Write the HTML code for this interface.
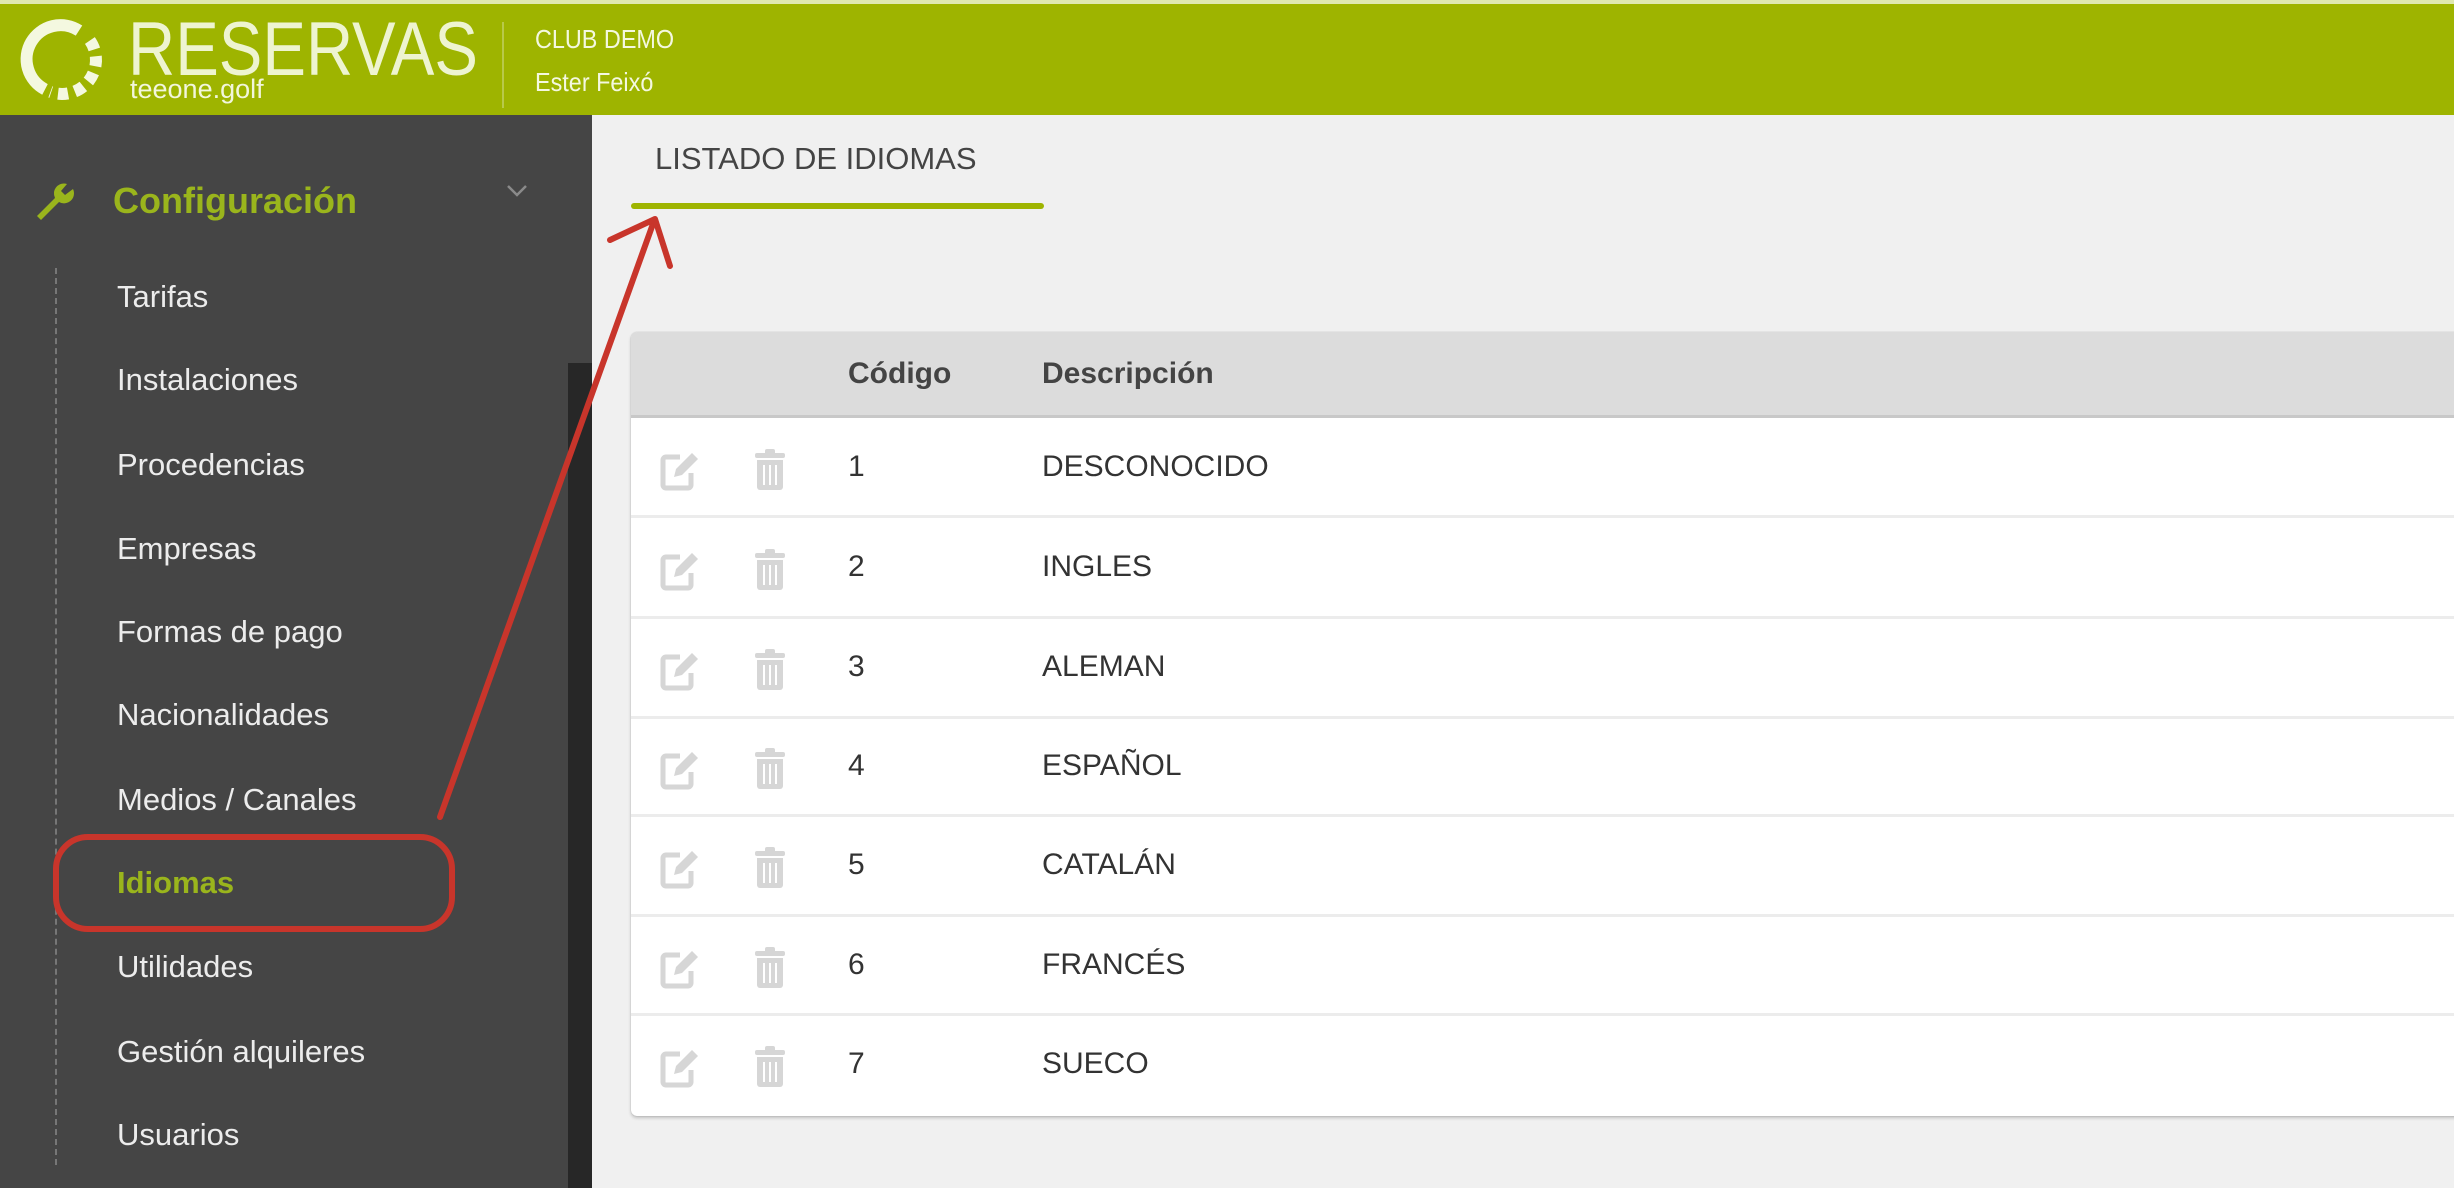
<!DOCTYPE html>
<html><head><meta charset="utf-8"><style>
*{margin:0;padding:0;box-sizing:border-box}
body{width:2454px;height:1188px;overflow:hidden;background:#f0f0f0;font-family:"Liberation Sans",sans-serif;position:relative}
.hdr{position:absolute;left:0;top:0;width:2454px;height:115px;background:#9eb400;border-top:4px solid #dfe8b0}
.abs{position:absolute;white-space:nowrap}
.side{position:absolute;left:0;top:115px;width:592px;height:1073px;background:#454545}
.strip{position:absolute;left:568px;top:363px;width:24px;height:825px;background:#272727}
.mi{position:absolute;left:117px;font-size:31px;color:#ececec;transform:translateY(-50%)}
.tbl{position:absolute;left:631px;top:332px;width:1830px;height:784px;background:#fff;border-radius:6px 0 0 6px;box-shadow:0 2px 3px rgba(0,0,0,.2),0 0 1px rgba(0,0,0,.25)}
.th{position:absolute;left:0;top:0;width:100%;height:86px;background:#dcdcdc;border-bottom:3px solid #c8c8c8;border-radius:6px 0 0 0}
.cell{position:absolute;font-size:30px;color:#333;transform:translateY(-50%)}
</style></head><body>
<div class="hdr"></div>
<svg class="abs" style="left:0;top:0" width="125" height="115" viewBox="0 0 125 115">
<g fill="none" stroke="#f4f8e0" stroke-width="12">
<path d="M79 30.6 A34 34 0 1 0 45 89.4"/>
<path d="M89.9 40.5 A34 34 0 0 1 50.4 91.9" stroke-dasharray="10 7"/>
</g></svg>
<div class="abs" style="left:128px;top:6px;font-size:76px;color:#eef4d0;font-weight:300;transform:scaleX(0.86);transform-origin:left">RESERVAS</div>
<div class="abs" style="left:130px;top:74px;font-size:27px;color:#f2f6dc">teeone.golf</div>
<div class="abs" style="left:502px;top:22px;width:2px;height:86px;background:#b8c94a"></div>
<div class="abs" style="left:535px;top:24px;font-size:26px;color:#f4f8e0;transform:scaleX(.9);transform-origin:left">CLUB DEMO</div>
<div class="abs" style="left:535px;top:67px;font-size:26px;color:#f4f8e0;transform:scaleX(.9);transform-origin:left">Ester Feixó</div>

<div class="side"></div>
<div class="strip"></div>
<svg class="abs" style="left:33px;top:180px" width="46" height="40" viewBox="0 0 46 40"><path d="M4 36 L22 18 A10 10 0 0 1 34 4 L28 11 L32 15 L40 9 A10 10 0 0 1 26 22 L8 40 Z" fill="#9ab51c"/></svg>
<div class="abs" style="left:113px;top:180px;font-size:36px;font-weight:bold;color:#9ab51c">Configuración</div>
<svg class="abs" style="left:506px;top:184px" width="22" height="14"><path d="M2 2 L11 11 L20 2" fill="none" stroke="#8a8a8a" stroke-width="2.5"/></svg>
<div class="abs" style="left:55px;top:268px;height:897px;border-left:2px dashed #777"></div>
<div class="mi" style="top:297px">Tarifas</div>
<div class="mi" style="top:380px">Instalaciones</div>
<div class="mi" style="top:465px">Procedencias</div>
<div class="mi" style="top:549px">Empresas</div>
<div class="mi" style="top:632px">Formas de pago</div>
<div class="mi" style="top:715px">Nacionalidades</div>
<div class="mi" style="top:800px">Medios / Canales</div>
<div class="mi" style="top:883px;color:#9ab51c;font-weight:bold">Idiomas</div>
<div class="mi" style="top:967px">Utilidades</div>
<div class="mi" style="top:1052px">Gestión alquileres</div>
<div class="mi" style="top:1135px">Usuarios</div>

<div class="abs" style="left:655px;top:141px;font-size:31px;color:#444">LISTADO DE IDIOMAS</div>
<div class="abs" style="left:631px;top:203px;width:413px;height:6px;background:#9eb400;border-radius:3px"></div>

<div class="tbl">
<div class="th"></div>
<div class="cell" style="left:217px;top:42px;font-weight:bold;color:#444">Código</div>
<div class="cell" style="left:411px;top:42px;font-weight:bold;color:#444">Descripción</div>
</div>
<div id="rows"></div>
<script>
var d=["DESCONOCIDO","INGLES","ALEMAN","ESPAÑOL","CATALÁN","FRANCÉS","SUECO"],t=[418,516,617,717,815,915,1014,1114],h="";
for(var i=0;i<7;i++){var c=(t[i]+t[i+1])/2;
if(i<6)h+='<div class="abs" style="left:631px;top:'+(t[i+1]-1)+'px;width:1823px;height:3px;background:#ececec"></div>';
h+='<svg class="abs" style="left:660px;top:'+(c-18)+'px" width="40" height="42" viewBox="0 0 40 42"><path d="M20 8 H6 a3 3 0 0 0 -3 3 V36 a3 3 0 0 0 3 3 H28 a3 3 0 0 0 3 -3 V24" fill="none" stroke="#d6d6d6" stroke-width="5"/><path d="M14 28 L16 20 L32 4 L38 10 L22 26 Z" fill="#d6d6d6"/></svg>';
h+='<svg class="abs" style="left:753px;top:'+(c-20)+'px" width="34" height="44" viewBox="0 0 34 44"><rect x="2" y="6" width="30" height="5" rx="2" fill="#d6d6d6"/><rect x="12" y="2" width="10" height="6" rx="2" fill="#d6d6d6"/><path d="M4 13 H30 V40 a3 3 0 0 1 -3 3 H7 a3 3 0 0 1 -3 -3 Z" fill="#d6d6d6"/><path d="M11 18 V38 M17 18 V38 M23 18 V38" stroke="#fff" stroke-width="2"/></svg>';
h+='<div class="cell" style="left:848px;top:'+c+'px">'+(i+1)+'</div><div class="cell" style="left:1042px;top:'+c+'px">'+d[i]+'</div>';}
document.getElementById("rows").innerHTML=h;
</script>

<svg class="abs" style="left:0;top:0" width="2454" height="1188">
<rect x="56" y="837" width="396" height="92" rx="32" fill="none" stroke="#c8352b" stroke-width="6"/>
<g fill="none" stroke="#c8352b" stroke-width="6" stroke-linecap="round" stroke-linejoin="round">
<path d="M440 817 L654 221"/>
<path d="M610 240 L655 219 L670 266"/>
</g></svg>
</body></html>
